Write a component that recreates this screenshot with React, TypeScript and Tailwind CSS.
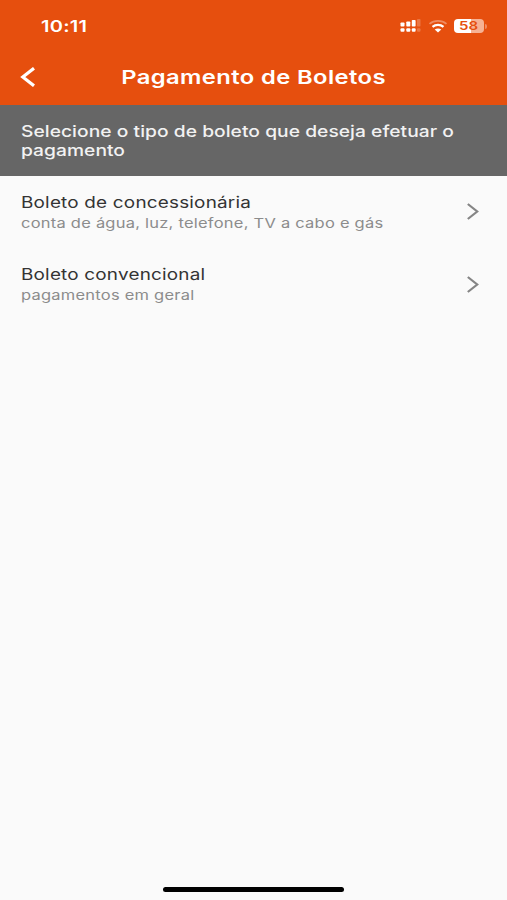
import * as React from 'react';

const options = [
  {
    title: 'Boleto de concessionária',
    description: 'conta de água, luz, telefone, TV a cabo e gás',
  },
  {
    title: 'Boleto convencional',
    description: 'pagamentos em geral',
  },
];

const SignalIcon = () => (
  <svg className="w-[21px] h-3.5 mr-px" viewBox="0 0 21 14" fill="#fff">
    <rect x="0.5" y="3.5" width="4" height="4" rx="0.8" />
    <rect x="6.3" y="2.5" width="4" height="5" rx="0.8" />
    <rect x="11.8" y="1" width="3.8" height="6.5" rx="0.8" />
    <rect x="0.5" y="9.3" width="4" height="3.4" rx="1" />
    <rect x="6.3" y="9.3" width="4" height="3.4" rx="1" />
    <rect x="11.8" y="9.3" width="3.8" height="3.4" rx="1" />
    <g opacity="0.22">
      <rect x="17" y="0" width="3.5" height="7.5" rx="0.8" />
      <rect x="17" y="9.3" width="3.5" height="3.4" rx="1" />
    </g>
  </svg>
);

const WifiIcon = () => (
  <svg className="w-5 h-3.5" viewBox="0 0 20 14" fill="none" stroke="#fff" strokeWidth="2">
    <path d="M1.5 4.9C6.2 0.9 13.8 0.9 18.5 4.9" strokeWidth="1.8" opacity="0.35" />
    <path d="M4.5 7.9C7.6 5.1 12.4 5.1 15.5 7.9" strokeWidth="2.2" />
    <path d="M10 13.4L6.7 10.5C8.6 9 11.4 9 13.3 10.5Z" fill="#fff" stroke="none" />
  </svg>
);

const BatteryIcon = () => (
  <div className="flex items-center gap-px">
    <div className="w-[30px] h-3.5 rounded-[4px] bg-linear-to-r from-white from-58% to-[#f6b294] to-58% flex items-center justify-center">
      <span className="text-[12px] leading-none font-semibold text-[#e64f0e] scale-x-[1.25]">58</span>
    </div>
    <span className="w-0.5 h-[5px] rounded-r-full bg-[#f08a60]" />
  </div>
);

export default function App() {
  return (
    <div className="h-[900px] w-full flex flex-col overflow-hidden bg-[#fafafa] font-['Inter','Liberation_Sans',sans-serif]">
      {/* STATUS BAR + TITLE */}
      <header className="h-[105px] shrink-0 bg-[#e64f0e] text-white">
        <div className="h-[52px] flex items-center justify-between pl-[41px] pr-5">
          <span className="text-[16px] font-semibold tracking-[0.2px] origin-left scale-x-[1.25]">10:11</span>
          <div className="flex items-center gap-1.5">
            <SignalIcon />
            <WifiIcon />
            <BatteryIcon />
          </div>
        </div>
        <div className="h-[50px] grid grid-cols-[60px_1fr_60px] items-center">
          <button className="pl-5" aria-label="Voltar">
            <svg className="w-4 h-5" viewBox="0 0 16 20" fill="none" stroke="#fff" strokeWidth="3.2">
              <path d="M14 1.2L2.8 10L14 18.8" />
            </svg>
          </button>
          <h1 className="pt-0.5 text-center whitespace-nowrap text-[19px] font-semibold tracking-[0.32px] scale-x-[1.25]">
            Pagamento de Boletos
          </h1>
        </div>
      </header>

      <section className="h-[70.5px] shrink-0 bg-[#666666] pl-[21px] pt-[17px]">
        <p className="w-max text-[16px] leading-[19px] font-medium tracking-[0.04px] text-[#f2f2f2] origin-left scale-x-[1.2]">
          Selecione o tipo de boleto que deseja efetuar o
          <br />
          pagamento
        </p>
      </section>

      {/* BOLETO TYPES */}
      <ul className="flex-1">
        {options.map((option) => (
          <li key={option.title} className="h-[72.5px] flex items-center justify-between pl-[21px] pr-7">
            <div className="pt-0.5 whitespace-nowrap origin-left scale-x-[1.22]">
              <p className="text-[15.5px] leading-5 tracking-[0.16px] text-[#333333]">{option.title}</p>
              <p className="text-[13.5px] leading-5 tracking-[0.2px] text-[#8c8c8c]">{option.description}</p>
            </div>
            <svg className="w-3 h-[17px]" viewBox="0 0 12 17" fill="none" stroke="#858585" strokeWidth="2.2">
              <path d="M0.8 1L10.2 8.5L0.8 16" />
            </svg>
          </li>
        ))}
      </ul>

      {/* HOME INDICATOR */}
      <footer className="flex justify-center pb-2">
        <div className="w-[181px] h-[5px] rounded-full bg-black" />
      </footer>
    </div>
  );
}
